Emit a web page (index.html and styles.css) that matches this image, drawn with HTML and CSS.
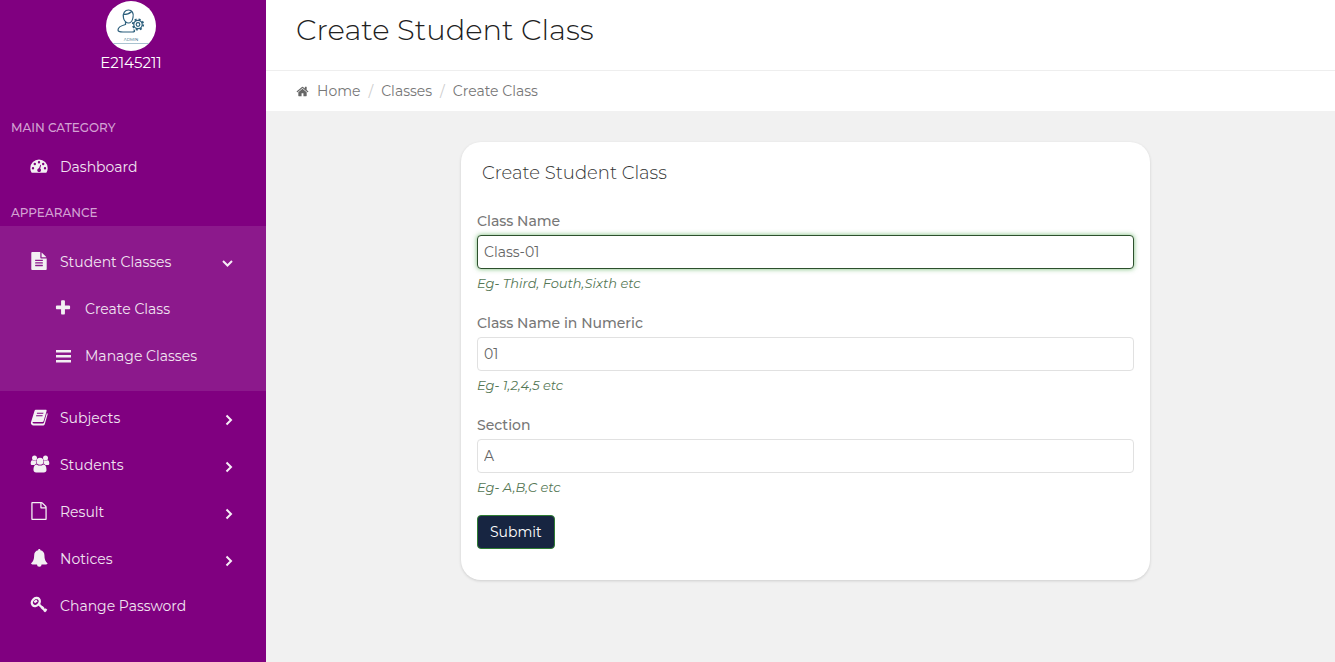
FILE: index.html
```html
<!DOCTYPE html>
<html lang="en">
<head>
<meta charset="utf-8">
<meta name="viewport" content="width=device-width, initial-scale=1">
<title>Create Student Class</title>
<link rel="stylesheet" href="styles.css">
</head>
<body>
<div class="layout">
  <aside class="sidebar">
    <div class="profile">
      <svg class="avatar" viewBox="0 0 50 50" aria-label="Admin">
        <circle cx="25" cy="25" r="25" fill="#fff"/>
        <g fill="none" stroke="#2d5f7c" stroke-width="1.2" stroke-linecap="round">
          <path d="M17.500 17c-1-5 1.500-8 5-8s5.500 3 4.500 7.500c-.5 3-2.500 5.500-4.500 5.500S18 20 17.500 17zM17.500 13.500c3 0 5.500-.5 7.500-2.500"/>
          <path d="M19.500 21v2.500c-4 1-7.500 2.500-7.500 5.500 0 1.500 2 2 5 2h9c3 0 3-1 2-2"/>
          <circle cx="32" cy="23.500" r="4.200"/>
          <circle cx="32" cy="23.500" r="1.800"/>
          <circle cx="32" cy="23.500" r="5.200" stroke-width="1.800" stroke-linecap="butt" stroke-dasharray="2.040 2.040"/>
        </g>
        <path d="M7 42.500h36" stroke="#a9c3d0" stroke-width="1"/>
        <text class="avatar-text" x="25" y="40" text-anchor="middle">ADMIN</text>
      </svg>
      <span class="user-id">E2145211</span>
    </div>
    <nav class="menu">
      <h2 class="menu-heading">MAIN CATEGORY</h2>
      <a class="item" href="#"><svg class="icon" viewBox="0 0 18 18"><path fill-rule="evenodd" d="M9 2.500a8.700 8.700 0 0 0-8.700 8.700c0 1.600.400 3 1.200 4.300.200.200.400.300.600.300h13.800c.200 0 .500-.100.600-.300.800-1.300 1.200-2.700 1.200-4.300A8.700 8.700 0 0 0 9 2.500zM3 10a1.200 1.200 0 1 1 0 2.400A1.200 1.200 0 0 1 3 10zm1.800-4.200a1.200 1.200 0 1 1 0 2.400 1.200 1.200 0 0 1 0-2.400zM9 4a1.200 1.200 0 1 1 0 2.400A1.200 1.200 0 0 1 9 4zm4.200 1.800a1.200 1.200 0 1 1 0 2.400 1.200 1.200 0 0 1 0-2.400zM15 10a1.200 1.200 0 1 1 0 2.400 1.200 1.200 0 0 1 0-2.400zm-4.700-2.300.8.200-.9 3.700a1.900 1.900 0 1 1-1.200-.3z"/></svg><span>Dashboard</span></a>
      <h2 class="menu-heading appearance">APPEARANCE</h2>
      <div class="group">
        <a class="item" href="#"><svg class="icon" viewBox="0 0 1792 1792"><path d="M1596 476q14 14 28 36h-472v-472q22 14 36 28zm-476 164h544v1056q0 40-28 68t-68 28h-1344q-40 0-68-28t-28-68v-1600q0-40 28-68t68-28h800v544q0 40 28 68t68 28zm160 736v-64q0-14-9-23t-23-9h-704q-14 0-23 9t-9 23v64q0 14 9 23t23 9h704q14 0 23-9t9-23zm0-256v-64q0-14-9-23t-23-9h-704q-14 0-23 9t-9 23v64q0 14 9 23t23 9h704q14 0 23-9t9-23zm0-256v-64q0-14-9-23t-23-9h-704q-14 0-23 9t-9 23v64q0 14 9 23t23 9h704q14 0 23-9t9-23z"/></svg><span>Student Classes</span><svg class="chevron" viewBox="0 0 12 12"><path d="M1 3 5.500 7.500 10 3"/></svg></a>
        <a class="item sub" href="#"><svg class="icon" viewBox="0 0 1792 1792"><path d="M1600 736v192q0 40-28 68t-68 28h-416v416q0 40-28 68t-68 28h-192q-40 0-68-28t-28-68v-416h-416q-40 0-68-28t-28-68v-192q0-40 28-68t68-28h416v-416q0-40 28-68t68-28h192q40 0 68 28t28 68v416h416q40 0 68 28t28 68z"/></svg><span>Create Class</span></a>
        <a class="item sub" href="#"><svg class="icon" viewBox="0 0 18 18"><path d="M2 4h15v2.500H2zM2 9h15v2.500H2zM2 14h15v2.500H2z"/></svg><span>Manage Classes</span></a>
      </div>
      <a class="item" href="#"><svg class="icon" viewBox="0 0 18 18"><path fill-rule="evenodd" d="M6.200 1.800h9.600c.700 0 1 .6.800 1.200l-2.900 9.700c-.3 1-.8 1.300-1.700 1.300H3.300c-.6 0-.9.300-.7.800.2.500.7.700 1.300.7h9c.500 0 .8-.2 1-.7l3-9.900c.7.400.9.900.6 1.800L14.800 16c-.3 1-1.200 1.600-2.100 1.600H3.500c-1.600 0-3-1.500-2.600-3L4.400 3.200c.3-.9.900-1.400 1.800-1.400zm.9 3-.3 1h6.400l.3-1zm-.8 2.500-.3 1h6.400l.3-1z"/></svg><span>Subjects</span><svg class="chevron" viewBox="0 0 12 12"><path d="M4.500 1.500 9 6 4.500 10.500"/></svg></a>
      <a class="item" href="#"><svg class="icon wide" viewBox="0 0 20 18"><circle cx="4.500" cy="3" r="2.500"/><circle cx="15.500" cy="3" r="2.500"/><circle cx="10" cy="6.200" r="3.500"/><path d="M2.400 5.200c-1.200.2-1.700 1.500-1.700 3.200 0 1 .6 1.500 1.600 1.500h2.300c.5-.7 1.200-1.100 2.100-1.300-.8-1.200-.9-2-.7-3.300-1.200.5-2.400.4-3.600-.1zM17.600 5.200c1.200.2 1.700 1.500 1.700 3.200 0 1-.6 1.500-1.600 1.500h-2.300c-.5-.7-1.200-1.100-2.100-1.300.8-1.200.9-2 .7-3.300 1.200.5 2.400.4 3.600-.1zM6.600 9.400C4.300 9.500 3.500 12 3.500 15c0 1.600 1 2.500 2.600 2.500h7.800c1.600 0 2.600-.9 2.600-2.500 0-3-.8-5.500-3.100-5.600-2 1.600-4.800 1.600-6.800 0z"/></svg><span>Students</span><svg class="chevron" viewBox="0 0 12 12"><path d="M4.500 1.500 9 6 4.500 10.500"/></svg></a>
      <a class="item" href="#"><svg class="icon" viewBox="0 0 1792 1792"><path d="M1596 380q28 28 48 76t20 88v1152q0 40-28 68t-68 28h-1344q-40 0-68-28t-28-68v-1600q0-40 28-68t68-28h896q40 0 88 20t76 48zm-444-244v376h376q-10-29-22-41l-313-313q-12-12-41-22zm384 1528v-1024h-416q-40 0-68-28t-28-68v-416h-768v1536h1280z"/></svg><span>Result</span><svg class="chevron" viewBox="0 0 12 12"><path d="M4.500 1.500 9 6 4.500 10.500"/></svg></a>
      <a class="item" href="#"><svg class="icon" viewBox="0 0 18 18"><path d="M9.300 0c.7 0 1.200.5 1.100 1.200 2.500.5 4 2.400 4 4.800 0 4.500 1.200 6.800 3.100 8.200 0 .7-.6 1.200-1.300 1.200h-4.600a2.300 2.300 0 0 1-4.600 0H2.400c-.7 0-1.300-.5-1.300-1.200C3 12.800 4.200 10.500 4.200 6c0-2.400 1.500-4.300 4-4.800C8.100.5 8.600 0 9.300 0z"/></svg><span>Notices</span><svg class="chevron" viewBox="0 0 12 12"><path d="M4.500 1.500 9 6 4.500 10.500"/></svg></a>
      <a class="item" href="#"><svg class="icon" viewBox="0 0 18 18"><g class="key"><ellipse cx="5.800" cy="6" rx="4.400" ry="3.500" transform="rotate(-45 5.800 6)"/><path d="M4.300 6.200 7 4.500M9 8.500l7 7M11.500 12.800l2-2M14 15.500l2.500-2.500"/></g></svg><span>Change Password</span></a>
    </nav>
  </aside>
  <main class="main">
    <header class="page-header"><h1 class="page-title">Create Student Class</h1></header>
    <nav class="breadcrumb" aria-label="Breadcrumb">
      <a href="#"><svg class="home" viewBox="0 0 1792 1792"><path d="M1472 992v480q0 26-19 45t-45 19h-384v-384h-256v384h-384q-26 0-45-19t-19-45v-480q0-1 .5-3t.5-3l575-474 575 474q1 2 1 6zm223-69l-62 74q-8 9-21 11h-3q-13 0-21-7l-692-577-692 577q-12 8-24 7-13-2-21-11l-62-74q-8-10-7-23.5t11-21.500l719-599q32-26 76-26t76 26l244 204v-195q0-14 9-23t23-9h192q14 0 23 9t9 23v408l219 182q10 8 11 21.500t-7 23.500z"/></svg>Home</a>
      <span class="slash">/</span>
      <a href="#">Classes</a>
      <span class="slash">/</span>
      <span>Create Class</span>
    </nav>
    <section class="content">
      <form class="card">
        <h2 class="card-title">Create Student Class</h2>
        <div class="field">
          <label for="class-name">Class Name</label>
          <input class="focused" id="class-name" type="text" value="Class-01">
          <span class="help">Eg- Third, Fouth,Sixth etc</span>
        </div>
        <div class="field">
          <label for="class-number">Class Name in Numeric</label>
          <input id="class-number" type="text" value="01">
          <span class="help">Eg- 1,2,4,5 etc</span>
        </div>
        <div class="field">
          <label for="section">Section</label>
          <input id="section" type="text" value="A">
          <span class="help">Eg- A,B,C etc</span>
        </div>
        <button class="submit" type="button">Submit</button>
      </form>
    </section>
  </main>
</div>
</body>
</html>
```

FILE: styles.css
```css
* { box-sizing: border-box; }
body {
  margin: 0;
  font-family: Montserrat, Inter, sans-serif;
  font-size: 14px;
  line-height: 20px;
  color: #6c6c6c;
  background: #f1f1f1;
}
h1, h2 { margin: 0; font-weight: 400; }
a { color: inherit; text-decoration: none; }

.layout { display: flex; min-height: 100vh; }
.sidebar { width: 266px; flex: none; background: #800080; color: #f1e4f1; }
.profile {
  display: flex;
  flex-direction: column;
  align-items: center;
  padding: 1px 4px 0 0;
}
.avatar { width: 50px; height: 50px; }
.avatar-text { font-size: 4px; fill: #2d5f7c; }
.user-id { margin-top: 2px; font-size: 15px; color: #fff; }
.menu { padding-top: 45px; }
.menu-heading {
  padding-left: 11px;
  font-size: 12px;
  font-weight: 500;
  color: #d3a2d3;
}
.item {
  display: flex;
  align-items: center;
  height: 47px;
  padding: 0 32px 0 30px;
}
.menu-heading + .item { margin-top: 5px; }
.appearance { margin-top: 13px; }
.group { margin: 3px 0; padding: 12px 0; background: #8c198c; }
.sub { padding-left: 54px; }
.icon {
  width: 18px;
  height: 18px;
  margin: 0 12px 2px 0;
  flex: none;
  fill: #f3f0f3;
}
.icon.wide { width: 20px; margin-right: 10px; }
.sub .icon { margin-right: 13px; }
.key { fill: none; stroke: #f3f0f3; stroke-width: 2.4; }
.chevron {
  width: 12px;
  height: 12px;
  margin: 4px 0 0 auto;
  fill: none;
  stroke: #f6edf6;
  stroke-width: 2;
}

.main { flex: 1; min-width: 0; }
.page-header {
  padding: 10px 30px 20px;
  background: #fff;
  border-bottom: 1px solid #eee;
}
.page-title {
  font-size: 29px;
  font-weight: 300;
  line-height: 40px;
  color: #212121;
}
.breadcrumb {
  display: flex;
  gap: 8px;
  padding: 10px 30px;
  background: #fff;
  color: #777;
}
.breadcrumb a { display: flex; align-items: center; }
.home { width: 13px; height: 13px; margin-right: 8px; fill: #666; }
.slash { color: #ccc; }
.content { padding: 31px 185px 40px 195px; }
.card {
  padding: 16px 16px 31px;
  border-radius: 20px;
  background: #fff;
  box-shadow: 0 1px 3px rgba(0, 0, 0, .15);
}
.card-title {
  margin-bottom: 23px;
  padding: 5px;
  font-size: 18px;
  font-weight: 300;
  color: #333;
}
.field { display: flex; flex-direction: column; }
.field + .field { margin-top: 20px; }
.field label { margin-bottom: 4px; font-weight: 500; color: #777; }
.field input {
  width: 100%;
  height: 34px;
  padding: 0 6px;
  border: 1px solid #e1e1e1;
  border-radius: 4px;
  background: #fff;
  font: inherit;
  color: #666;
  outline: 0;
}
.field .focused {
  border-color: #2d502d;
  box-shadow: 0 0 5px rgba(60, 160, 60, .7);
}
.help {
  margin-top: 4px;
  font-size: 13px;
  font-style: italic;
  color: #557755;
}
.submit {
  height: 34px;
  margin-top: 18px;
  padding: 0 12px;
  border: 1px solid #2e7d32;
  border-radius: 4px;
  background: #172541;
  color: #fff;
  font: inherit;
}
```
